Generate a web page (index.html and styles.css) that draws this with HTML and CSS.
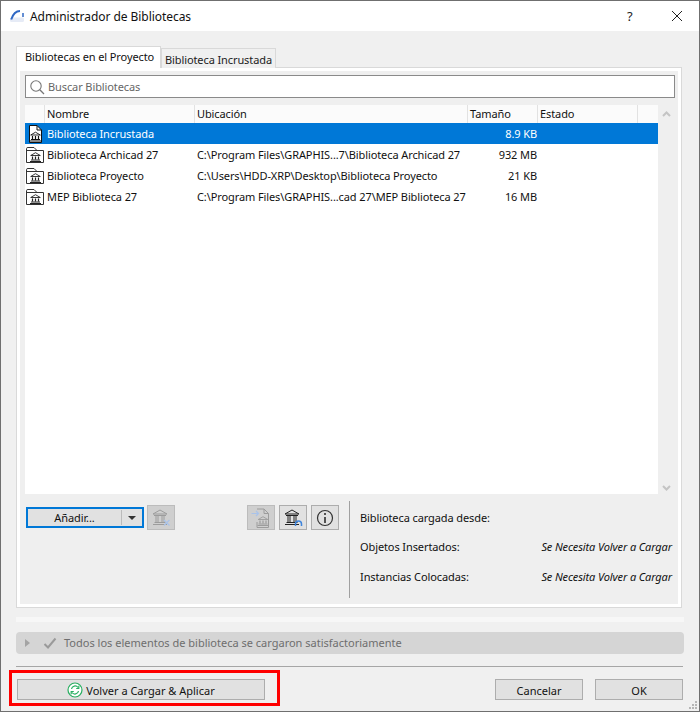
FILE: index.html
```html
<!DOCTYPE html>
<html lang="es">
<head>
<meta charset="utf-8">
<title>Administrador de Bibliotecas</title>
<link rel="stylesheet" href="styles.css">
</head>
<body>
<svg class="defs" width="0" height="0" aria-hidden="true">
  <defs>
    <g id="temple">
      <path d="M5.500 .7 L10.300 3.500 H.7 Z" fill="none" stroke="currentColor" stroke-width=".9"/>
      <path d="M2.500 4.500 V7.500 M5.500 4.500 V7.500 M8.500 4.500 V7.500" fill="none" stroke="currentColor" stroke-width="1.200"/>
      <path d="M1 8 H10 M0 9.500 H11" fill="none" stroke="currentColor" stroke-width="1"/>
    </g>
    <g id="temple-lg">
      <path d="M8 1 L15 5 H1 Z" fill="none" stroke="currentColor" stroke-width="1"/>
      <path d="M2 6.500 H14" fill="none" stroke="currentColor" stroke-width="1"/>
      <path d="M4 7 V13 M6 7 V13 M10 7 V13 M12 7 V13" fill="none" stroke="currentColor" stroke-width="1"/>
      <path d="M2.500 13.500 H13.500 M1 15.500 H15" fill="none" stroke="currentColor" stroke-width="1"/>
    </g>
    <g id="folder">
      <path d="M.5 15.500 V1.500 Q.5 .5 2 .5 H8 L11 3.500 H17.500 V15.500 Z" fill="#fff" stroke="#333"/>
      <path d="M.5 3.500 H11" stroke="#333" fill="none"/>
      <use href="#temple" x="4" y="5" color="#222"/>
    </g>
  </defs>
</svg>
<div class="window">
  <header class="titlebar">
    <svg class="applogo" width="16" height="16" viewBox="0 0 16 16"><rect x="0" y="9.500" width="14" height="4.500" rx="1.500" fill="#e6ebf6"/><path d="M1.200 11.500 C3 6 6 3 10 3" fill="none" stroke="#3068c4" stroke-width="2"/><path d="M13 5 V9" fill="none" stroke="#3068c4" stroke-width="1.500"/></svg>
    <span class="title">Administrador de Bibliotecas</span>
    <span class="help">?</span>
    <svg class="close" width="12" height="12" viewBox="0 0 12 12"><path d="M1 1 L11 11 M11 1 L1 11" stroke="#222" stroke-width="1"/></svg>
  </header>

  <main class="content">
    <div class="tabs">
      <div class="tab active">Bibliotecas en el Proyecto</div>
      <div class="tab">Biblioteca Incrustada</div>
    </div>
    <section class="panel">
      <div class="search">
        <svg width="16" height="16" viewBox="0 0 16 16"><circle cx="7" cy="7" r="5.200" fill="none" stroke="#777" stroke-width="1.100"/><path d="M10.800 10.800 L15 15" stroke="#777" stroke-width="1.300"/></svg>
        <span>Buscar Bibliotecas</span>
      </div>

      <div class="listwrap">
        <div class="list">
          <div class="thead">
            <div class="th c0"></div>
            <div class="th c1">Nombre</div>
            <div class="th c2">Ubicación</div>
            <div class="th c3">Tamaño</div>
            <div class="th c4">Estado</div>
            <div class="th c5"></div>
          </div>
          <div class="row selected">
            <div class="c0"><svg class="ico" width="18" height="18" viewBox="0 0 18 18"><path d="M3.500 .5 H11 L15.500 5 V17.500 H3.500 Z" fill="#fff" stroke="#111"/><path d="M11 .5 V5 H15.500" fill="none" stroke="#111"/><use href="#temple" x="4" y="6.500" color="#111"/></svg></div>
            <div class="c1">Biblioteca Incrustada</div>
            <div class="c2"></div>
            <div class="c3 num">8.9 KB</div>
          </div>
          <div class="row">
            <div class="c0"><svg class="ico" width="18" height="16" viewBox="0 0 18 16"><use href="#folder"/></svg></div>
            <div class="c1">Biblioteca Archicad 27</div>
            <div class="c2">C:\Program Files\GRAPHIS...7\Biblioteca Archicad 27</div>
            <div class="c3 num">932 MB</div>
          </div>
          <div class="row">
            <div class="c0"><svg class="ico" width="18" height="16" viewBox="0 0 18 16"><use href="#folder"/></svg></div>
            <div class="c1">Biblioteca Proyecto</div>
            <div class="c2">C:\Users\HDD-XRP\Desktop\Biblioteca Proyecto</div>
            <div class="c3 num">21 KB</div>
          </div>
          <div class="row">
            <div class="c0"><svg class="ico" width="18" height="16" viewBox="0 0 18 16"><use href="#folder"/></svg></div>
            <div class="c1">MEP Biblioteca 27</div>
            <div class="c2">C:\Program Files\GRAPHIS...cad 27\MEP Biblioteca 27</div>
            <div class="c3 num">16 MB</div>
          </div>
        </div>
        <div class="scrollbar">
          <svg width="9" height="6" viewBox="0 0 9 6"><path d="M1 5 L4.500 1.500 L8 5" fill="none" stroke="#c4c4c4" stroke-width="2"/></svg>
          <svg width="9" height="6" viewBox="0 0 9 6"><path d="M1 1 L4.500 4.500 L8 1" fill="none" stroke="#c4c4c4" stroke-width="2"/></svg>
        </div>
      </div>

      <div class="lower">
        <div class="actions">
          <div class="split"><span class="split-label">Añadir...</span><span class="split-arrow"></span></div>
          <button class="iconbtn disabled first"><svg width="20" height="20" viewBox="0 0 20 20"><use href="#temple-lg" x="1" y="1" color="#9c9c9c"/><path d="M13 12 L18.500 17.500 M18.500 12 L13 17.500" stroke="#a9c3ea" stroke-width="1.200"/></svg></button>
          <div class="spacer"></div>
          <button class="iconbtn disabled"><svg width="20" height="20" viewBox="0 0 20 20"><path d="M6 1 H13 L17.500 5.500 V19.500 H6 V14" fill="none" stroke="#9c9c9c"/><path d="M13 1 V5.500 H17.500" fill="none" stroke="#9c9c9c"/><path d="M.5 5.500 H7.500 M5 3 L7.500 5.500 L5 8" fill="none" stroke="#a9c3ea" stroke-width="1.200"/><use href="#temple" x="6.500" y="8" color="#9c9c9c"/></svg></button>
          <button class="iconbtn"><svg width="20" height="20" viewBox="0 0 20 20"><use href="#temple-lg" x="1" y="1" color="#222"/><path d="M12.500 18 V16 A3 3 0 0 1 18.500 16 V18" fill="none" stroke="#3f85dc" stroke-width="1.500"/></svg></button>
          <button class="iconbtn"><svg width="20" height="20" viewBox="0 0 20 20"><circle cx="10" cy="10" r="7.500" fill="none" stroke="#333" stroke-width="1.200"/><path d="M10 9 V15" stroke="#222" stroke-width="1.500"/><circle cx="10" cy="6" r="1" fill="#222"/></svg></button>
        </div>
        <div class="info">
          <div class="inforow"><span>Biblioteca cargada desde:</span></div>
          <div class="inforow"><span>Objetos Insertados:</span><em>Se Necesita Volver a Cargar</em></div>
          <div class="inforow"><span>Instancias Colocadas:</span><em>Se Necesita Volver a Cargar</em></div>
        </div>
      </div>
    </section>

    <div class="strip"></div>
    <div class="status">
      <span class="tri"></span>
      <svg width="14" height="12" viewBox="0 0 14 12"><path d="M1.500 7 L5 10.500 L12.500 1.500" fill="none" stroke="#9a9a9a" stroke-width="2"/></svg>
      <span>Todos los elementos de biblioteca se cargaron satisfactoriamente</span>
    </div>
    <div class="sep"></div>

    <footer class="footer">
      <div class="highlight">
        <button class="btn wide"><svg width="16" height="16" viewBox="0 0 16 16"><circle cx="8" cy="8" r="7" fill="#fff" stroke="#27ae60" stroke-width="1.200"/><path d="M4.500 7 A3.600 3.600 0 0 1 11 5.500 M11.500 9 A3.600 3.600 0 0 1 5 10.500" fill="none" stroke="#27ae60" stroke-width="1.200"/><path d="M11.800 3.800 V6.500 H9.200 M4.200 12.200 V9.500 H6.800" fill="none" stroke="#27ae60" stroke-width="1.200"/></svg><span>Volver a Cargar &amp; Aplicar</span></button>
      </div>
      <button class="btn cancel">Cancelar</button>
      <button class="btn ok">OK</button>
    </footer>
    <svg class="grip" width="9" height="9" viewBox="0 0 9 9"><path d="M6 0h2v2H6zM3 3h2v2H3zM6 3h2v2H6zM0 6h2v2H0zM3 6h2v2H3zM6 6h2v2H6z" fill="#b5b5b5"/></svg>
  </main>
</div>
</body>
</html>
```
FILE: styles.css
```css
* { box-sizing: border-box; }
html, body { margin: 0; padding: 0; }
body {
  width: 700px;
  height: 712px;
  overflow: hidden;
  font-family: "Noto Sans", "Open Sans", sans-serif;
  font-size: 11px;
  letter-spacing: -0.1px;
  color: #111;
}
.defs { position: absolute; }
.window {
  width: 700px;
  height: 712px;
  border: 1px solid #6f6f6f;
  display: flex;
  flex-direction: column;
  background: #f0f0f0;
}
.titlebar {
  height: 30px;
  background: #fff;
  display: flex;
  align-items: center;
  padding-left: 9px;
  flex: none;
}
.applogo { flex: none; }
.title { margin-left: 4px; font-size: 12px; letter-spacing: -0.05px; color: #111; flex: 1; }
.help { font-size: 13px; width: 12px; margin-right: 32px; color: #222; }
.close { margin-right: 16px; }

.content {
  flex: 1;
  position: relative;
  padding: 15px 15px 0;
  display: flex;
  flex-direction: column;
}
.tabs { display: flex; align-items: flex-end; height: 22px; margin-bottom: -1px; position: relative; z-index: 1; }
.tab {
  height: 20px;
  padding: 0 3px;
  width: 115px;
  border: 1px solid #d9d9d9;
  border-bottom: 0;
  background: #f0f0f0;
  line-height: 21px;
  white-space: nowrap;
  color: #222;
}
.tab.active {
  width: 145px;
  height: 22px;
  background: #fff;
  padding-left: 8px;
  line-height: 19px;
  color: #111;
}
.panel {
  height: 541px;
  width: 666px;
  background: #efefef;
  border: 1px solid #d9d9d9;
  box-shadow: inset 0 0 0 3px #fff;
  padding: 7px 6px 0 8px;
  display: flex;
  flex-direction: column;
  flex: none;
}
.search {
  height: 23px;
  background: #fff;
  border: 1px solid #8a8a8a;
  display: flex;
  align-items: center;
  gap: 3px;
  padding-left: 3px;
  color: #666;
  flex: none;
}
.listwrap {
  display: flex;
  height: 389px;
  margin-top: 7px;
  background: #efefef;
  flex: none;
}
.list { width: 633px; background: #fff; flex: none; }
.thead { display: flex; height: 18px; background: #f4f4f4; }
.th { border-right: 1px solid #e2e2e2; padding-left: 2px; line-height: 17px; background: #fbfbfb; color: #111; height: 18px; }
.c0 { width: 20px; flex: none; }
.c1 { width: 150px; flex: none; }
.c2 { width: 273px; flex: none; }
.c3 { width: 70px; flex: none; }
.c4 { width: 100px; flex: none; }
.c5 { width: 20px; flex: none; border-right: 0; }
.row { display: flex; height: 21px; align-items: center; white-space: nowrap; color: #111; }
.row .c1 { padding-left: 2px; }
.row .c2 { padding-left: 2px; }
.row .c3 { text-align: right; padding-right: 1px; }
.row .c0 { display: flex; justify-content: center; }
.row.selected { background: #0078d7; color: #fff; }
.ico { flex: none; }
.scrollbar {
  width: 17px;
  padding: 6px 0 3px;
  display: flex;
  flex-direction: column;
  justify-content: space-between;
  align-items: center;
}

.lower { display: flex; flex: none; height: 97px; margin-top: 7px; }
.actions { width: 324px; display: flex; align-items: flex-start; padding: 4px 10px 0 0; flex: none; }
.split {
  width: 118px;
  height: 21px;
  margin: 2px 0 0 1px;
  border: 2px solid #0078d7;
  background: #e1e1e1;
  display: flex;
  align-items: center;
  flex: none;
}
.split-label { flex: 1; text-align: center; border-right: 1px solid #bbb; line-height: 15px; }
.split-arrow { width: 20px; display: flex; justify-content: center; }
.split-arrow::before { content: ""; border: 4px solid transparent; border-top: 4px solid #333; margin-top: 4px; }
.iconbtn {
  width: 28px;
  height: 25px;
  margin-left: 4px;
  padding: 0;
  background: #e1e1e1;
  border: 1px solid #adadad;
  display: flex;
  align-items: center;
  justify-content: center;
  flex: none;
}
.iconbtn.disabled { background: #cfcfcf; border-color: #bcbcbc; }
.iconbtn.first { margin-left: 3px; }
.spacer { flex: 1; }
.info {
  flex: 1;
  border-left: 1px solid #a0a0a0;
  padding: 9px 3px 0 10px;
  display: flex;
  flex-direction: column;
}
.inforow { display: flex; justify-content: space-between; height: 30px; line-height: 15px; white-space: nowrap; }
.inforow em { font-style: italic; letter-spacing: -0.12px; }

.strip { width: 668px; height: 5px; margin-top: 9px; background: #f7f7f7; flex: none; }
.status {
  width: 668px;
  height: 22px;
  margin-top: 10px;
  padding-bottom: 1px;
  border-radius: 4px;
  background: #d5d5d5;
  display: flex;
  align-items: center;
  color: #6e6e6e;
  letter-spacing: 0;
  flex: none;
}
.tri { border: 4px solid transparent; border-left: 5px solid #a4a4a4; margin: 0 9px 0 9px; }
.status svg { margin-right: 7px; }
.sep { width: 667px; height: 1px; margin-top: 12px; background: #a6a6a6; flex: none; }
.footer { display: flex; align-items: flex-start; margin-top: 3px; flex: none; }
.highlight {
  width: 271px;
  height: 36px;
  margin-left: -7px;
  border: 3px solid #f00;
  padding: 6px 5px;
  flex: none;
}
.btn {
  font: inherit;
  color: #111;
  background: #e1e1e1;
  border: 1px solid #adadad;
  height: 21px;
  padding: 1px 0 0;
  display: flex;
  align-items: center;
  justify-content: center;
  gap: 3px;
}
.wide { width: 248px; }
.cancel { width: 88px; margin: 9px 0 0 215px; }
.ok { width: 88px; margin: 9px 0 0 12px; }
.grip { position: absolute; right: 1px; bottom: 1px; }
```
